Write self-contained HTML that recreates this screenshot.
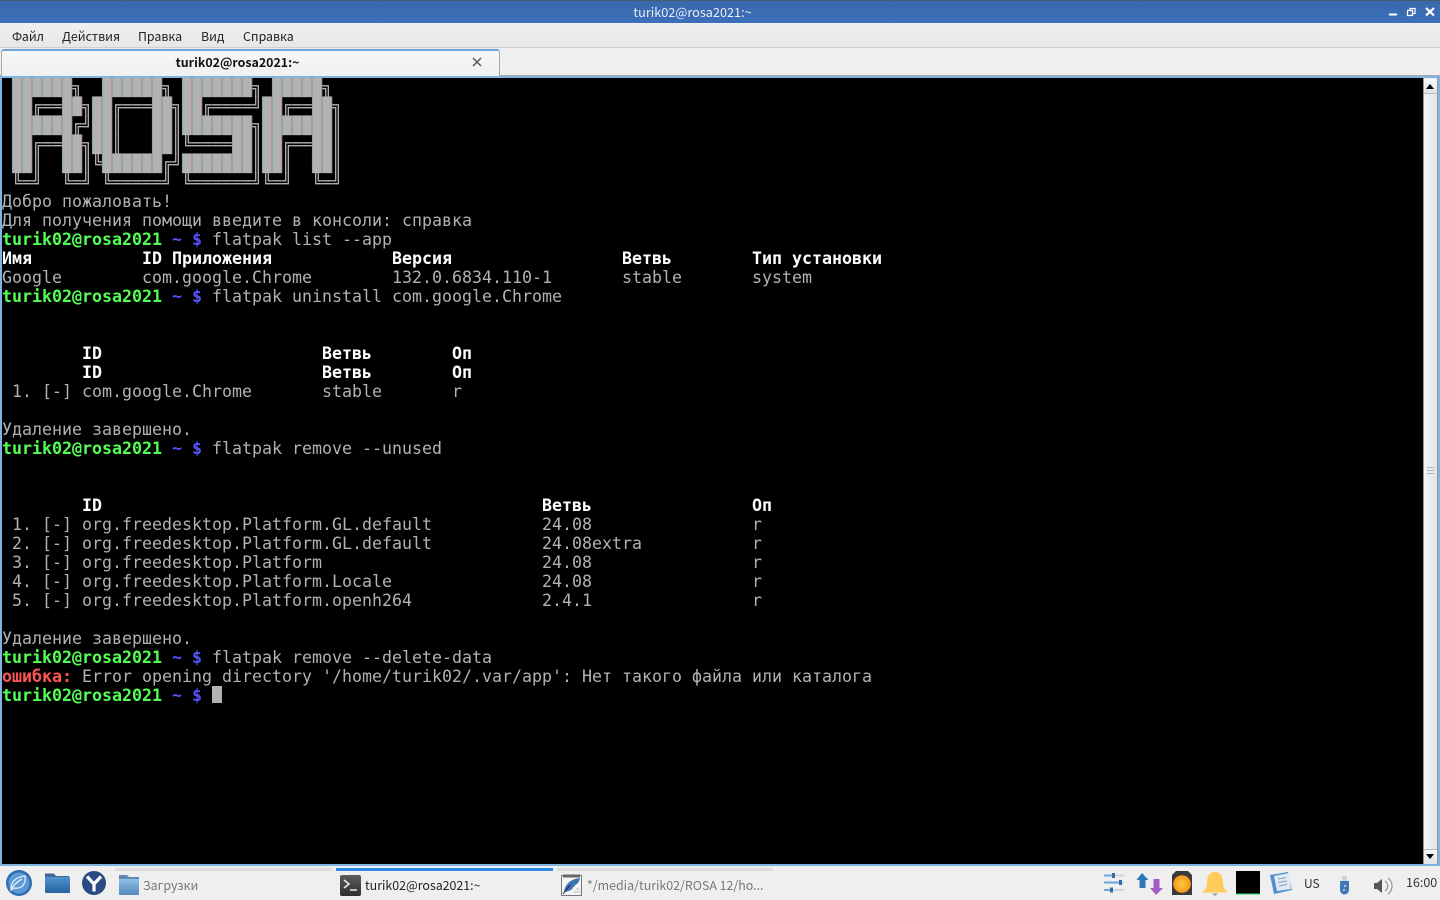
<!DOCTYPE html>
<html lang="ru"><head><meta charset="utf-8"><title>turik02@rosa2021:~</title>
<style>
*{box-sizing:border-box;margin:0;padding:0}
html,body{width:1440px;height:900px;overflow:hidden;background:#efefef;font-family:"Noto Sans CJK SC","Liberation Sans",sans-serif;font-size:12.4px;color:#222}
.a{position:absolute}
#title{left:0;top:0;width:1440px;height:23px;background:linear-gradient(#3a68ac,#3b6fb9);border-top:1px solid #4c5a70;color:#e8eef6;text-align:center;line-height:22px;padding-right:55px;font-size:12.7px}
#menu{left:0;top:23px;width:1440px;height:25px;background:linear-gradient(#f0f0f0,#e6e7e8);border-bottom:1px solid #cfcfcf}
#menu span{position:absolute;top:5px;line-height:17px;color:#222}
#tabbar{left:0;top:48px;width:1440px;height:28px;background:#efefef;border-bottom:1px solid #a8a8a8}
#tab{left:1px;top:49px;width:499px;height:27px;background:linear-gradient(#f6f7f8,#eff0f1);border:1px solid #a8a8a8;border-top:2px solid #6fa4d6;border-bottom:none;border-radius:3px 3px 0 0;text-align:center;font-weight:bold;color:#111;line-height:23px;padding-right:26px}
#frame{left:0;top:76px;width:1440px;height:790px;background:#7fb4e2}
#term{left:2px;top:78px;width:1421px;height:786px;background:#000;overflow:hidden}
#term pre{position:absolute;left:0;top:0;font-family:"DejaVu Sans Mono",monospace;font-size:16.61px;line-height:19px;color:#b2b2b2;white-space:pre}
#seam{left:10px;top:0;width:330px;height:114px;mix-blend-mode:multiply;background:repeating-linear-gradient(90deg,#c4f0ff 0,#c4f0ff 1px,#fff 1px,#fff 9px,#f6dcc8 9px,#f6dcc8 10px)}
b{font-weight:bold}
.g{color:#54ff54;font-weight:bold}.u{color:#5454ff;font-weight:bold}.w{color:#fff;font-weight:bold}.r{color:#ff5454;font-weight:bold}
#cur{left:210px;top:608px;width:10px;height:17px;background:#b2b2b2}
#sb{left:1423px;top:78px;width:15px;height:786px;background:linear-gradient(90deg,#f4f5f5,#e2e3e4);border-left:1px solid #999;border-right:1px solid #999}
.btn{left:1424px;width:13px;height:15px;background:linear-gradient(#f8f8f8,#e4e4e4);border-bottom:1px solid #bbb}
.grip{left:1427px;width:7px;height:1px;background:#b4b4b4}
#tb{left:0;top:866px;width:1440px;height:34px;background:#efefef}
.bar{top:868px;height:3px;background:#dcdcdc}
.tt{position:absolute;top:877px;line-height:17px;white-space:nowrap}
</style></head><body>
<div class="a" id="title">turik02@rosa2021:~</div>
<svg class="a" style="left:1380px;top:0" width="60" height="23" fill="none" stroke="#fff"><path d="M9 14.5h8" stroke-width="2"/><path d="M27.5 10.500h5v5h-5zM30 10V8.500h5v5h-2" stroke-width="1.200"/><path d="M46 8l8 7.500M54 8l-8 7.500" stroke-width="2.200"/></svg>
<div class="a" id="menu"><span style="left:12px">Файл</span><span style="left:62px">Действия</span><span style="left:138px">Правка</span><span style="left:201px">Вид</span><span style="left:243px">Справка</span></div>
<div class="a" id="tabbar"></div>
<div class="a" id="tab">turik02@rosa2021:~</div>
<svg class="a" style="left:472px;top:57px" width="10" height="10" stroke="#555" stroke-width="1.500"><path d="M1 1l8 8M9 1l-8 8"/></svg>
<div class="a" id="frame"></div>
<div class="a" id="term"><pre> ██████╗  ██████╗ ███████╗ █████╗
 ██╔══██╗██╔═══██╗██╔════╝██╔══██╗
 ██████╔╝██║   ██║███████╗███████║
 ██╔══██╗██║   ██║╚════██║██╔══██║
 ██║  ██║╚██████╔╝███████║██║  ██║
 ╚═╝  ╚═╝ ╚═════╝ ╚══════╝╚═╝  ╚═╝
Добро пожаловать!
Для получения помощи введите в консоли: справка
<span class="g">turik02@rosa2021</span> <span class="u">~ $</span> flatpak list --app
<span class="w">Имя           ID Приложения            Версия                 Ветвь        Тип установки</span>
Google        com.google.Chrome        132.0.6834.110-1       stable       system
<span class="g">turik02@rosa2021</span> <span class="u">~ $</span> flatpak uninstall com.google.Chrome


        <span class="w">ID                      Ветвь        Оп</span>
        <span class="w">ID                      Ветвь        Оп</span>
 1. [-] com.google.Chrome       stable       r

Удаление завершено.
<span class="g">turik02@rosa2021</span> <span class="u">~ $</span> flatpak remove --unused


        <span class="w">ID                                            Ветвь                Оп</span>
 1. [-] org.freedesktop.Platform.GL.default           24.08                r
 2. [-] org.freedesktop.Platform.GL.default           24.08extra           r
 3. [-] org.freedesktop.Platform                      24.08                r
 4. [-] org.freedesktop.Platform.Locale               24.08                r
 5. [-] org.freedesktop.Platform.openh264             2.4.1                r

Удаление завершено.
<span class="g">turik02@rosa2021</span> <span class="u">~ $</span> flatpak remove --delete-data
<span class="r">ошибка:</span> Error opening directory '/home/turik02/.var/app': Нет такого файла или каталога
<span class="g">turik02@rosa2021</span> <span class="u">~ $</span> </pre><div class="a" id="seam"></div><div class="a" id="cur"></div></div>
<div class="a" id="sb"></div>
<div class="a btn" style="top:79px"></div>
<svg class="a" style="left:1425px;top:82px" width="10" height="8"><path d="M1 7h8L5 2z" fill="#000"/></svg>
<div class="a btn" style="top:849px;border-top:1px solid #bbb;border-bottom:none"></div>
<svg class="a" style="left:1425px;top:853px" width="10" height="8"><path d="M1 1h8L5 6z" fill="#000"/></svg>
<div class="a grip" style="top:467px"></div><div class="a grip" style="top:470px"></div><div class="a grip" style="top:473px"></div>
<div class="a" id="tb"></div>
<div class="a bar" style="left:115px;width:217px"></div>
<div class="a bar" style="left:336px;width:217px;background:#2a8be6"></div>
<div class="a bar" style="left:557px;width:216px"></div>
<svg class="a" style="left:0;top:866px" width="120" height="34">
<defs><linearGradient id="f" x1="0" y1="0" x2="0" y2="1"><stop offset="0" stop-color="#4f93cf"/><stop offset="1" stop-color="#28619f"/></linearGradient>
<linearGradient id="f2" x1="0" y1="0" x2="0" y2="1"><stop offset="0" stop-color="#8fc0e6"/><stop offset="1" stop-color="#5288ba"/></linearGradient></defs>
<circle cx="19" cy="17" r="13" fill="#2f6db0"/><circle cx="19" cy="17" r="10.500" fill="#5b9ad4"/>
<path d="M11 24c0-8 4-13 14-14 1 8-3 13-10 12-1 0-2 0-4 2zM12 22c3-4 6-7 10-9" fill="none" stroke="#e2edf7" stroke-width="1.300"/>
<path d="M45 7.500h9l2 2.500h13v3H45z" fill="#3d6a95"/><path d="M45 11h25v15a1 1 0 0 1-1 1H46a1 1 0 0 1-1-1z" fill="url(#f)"/>
<circle cx="94" cy="17" r="12" fill="#2c4a82"/><path d="M87 10.500l7 7.500 7-7.500M94 18v7.500" fill="none" stroke="#fff" stroke-width="3.200"/>
</svg>
<svg class="a" style="left:119px;top:874px" width="22" height="22"><path d="M0 1h8l2 2h10v3H0z" fill="#5f89ad"/><path d="M0 5h20v15a1 1 0 0 1-1 1H1a1 1 0 0 1-1-1z" fill="url(#f2)"/></svg>
<div class="tt" style="left:143px;color:#777">Загрузки</div>
<svg class="a" style="left:340px;top:874px" width="22" height="22"><defs><linearGradient id="t" x1="0" y1="0" x2="0" y2="1"><stop offset="0" stop-color="#5c5c5c"/><stop offset="1" stop-color="#2e2e2e"/></linearGradient></defs><rect x="0" y="1" width="21" height="21" rx="2" fill="url(#t)"/><path d="M4 6l5 4-5 4" fill="none" stroke="#eee" stroke-width="1.500"/><path d="M10 16h7" stroke="#eee" stroke-width="1.500"/></svg>
<div class="tt" style="left:365px;color:#222">turik02@rosa2021:~</div>
<svg class="a" style="left:561px;top:874px" width="22" height="22"><rect x="0.500" y="1.500" width="20" height="20" fill="#f4f4f4" stroke="#777"/><path d="M2 0.500h17v3H2z" fill="#666"/><path d="M3 18c1-8 7-13 16-14-1 5-3 6-5 7 0 1-1 2-2 2 0 3-6 5-9 5z" fill="#3d72b4"/><path d="M2 20l7-9" stroke="#223" stroke-width="1"/><path d="M12 18h7M15 15h4" stroke="#bbb"/></svg>
<div class="tt" style="left:587px;color:#777">*/media/turik02/ROSA 12/ho...</div>
<svg class="a" style="left:1100px;top:866px" width="330" height="34">
<defs><radialGradient id="o"><stop offset="0" stop-color="#ffc93f"/><stop offset="1" stop-color="#f09a1a"/></radialGradient></defs>
<g stroke-width="2"><path d="M4 9.500h20M4 16.500h20M4 24h20" stroke="#cfd4d9"/><path d="M4 9.500h9M4 16.500h16M4 24h7" stroke="#6ba5d8"/></g>
<rect x="12" y="7" width="3" height="5" fill="#2f6da8"/><rect x="19" y="14" width="3" height="5" fill="#2f6da8"/><rect x="10" y="21.500" width="3" height="5" fill="#2f6da8"/>
<path d="M42 7l6.500 7H45.500v8h-6v-8h-3z" fill="#2f78b8"/><path d="M56 29l7-7h-3.500v-9h-6v9H50z" fill="#a35cc4"/>
<path d="M76 5h12l4 4v20H72V9z" fill="#3a3a3a"/><circle cx="82" cy="18" r="8.800" fill="url(#o)"/>
<path d="M115 6c6 0 8 5 8 10 0 4 1 7 3 9H104c2-2 3-5 3-9 0-5 2-10 8-10z" fill="#ffcb5c"/><path d="M103 25.500h24" stroke="#ffcb5c" stroke-width="2"/><path d="M112 27.500h6l-3 2.500z" fill="#999"/>
<rect x="136" y="5" width="24" height="23" fill="#000"/><path d="M136 28h24" stroke="#2fe06a" stroke-width="1"/>
<path d="M170 9l18-3 4 18-18 4z" fill="#4f8fcc"/><path d="M174 10l15-3 2 16-14 2z" fill="#dfeaf5"/><path d="M178 13l8-1.500M178 16.500l9-1.500M179 20l8-1.500" stroke="#7fa0c0"/>
<path d="M242 10h5v5h-5z" fill="#c8d4e0"/><path d="M240 15h9v9a4.500 4.500 0 0 1-9 0z" fill="#3f78b5"/><circle cx="245" cy="20" r="1" fill="#cfe0f0"/><circle cx="244" cy="24" r="1" fill="#cfe0f0"/>
<path d="M274 17h3l5-4v14l-5-4h-3z" fill="#555"/><path d="M285 15a6 6 0 0 1 0 10M288 12a10 10 0 0 1 0 16" fill="none" stroke="#999" stroke-width="1.300"/>
</svg>
<div class="tt" style="left:1304px;top:875px;font-size:12px;color:#333">US</div>
<div class="tt" style="left:1406px;top:873px;font-size:12.500px;color:#333">16:00</div>
</body></html>
